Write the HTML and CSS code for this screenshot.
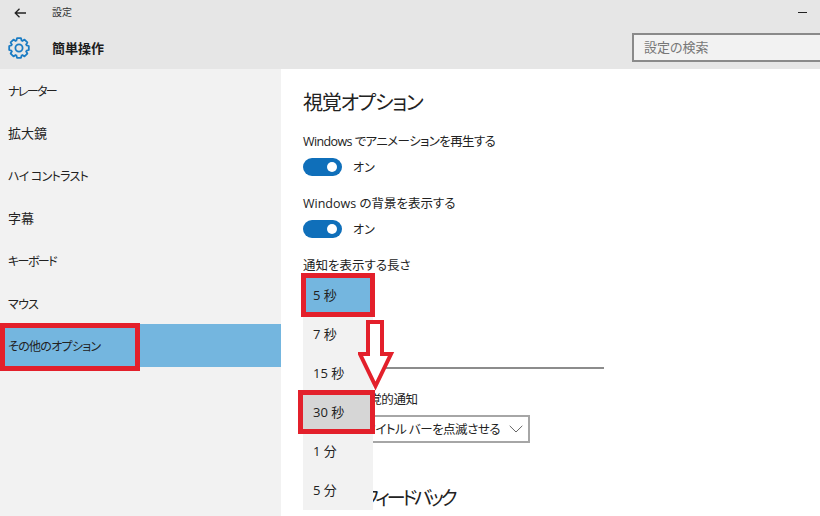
FILE: index.html
```html
<!DOCTYPE html>
<html lang="ja">
<head>
<meta charset="utf-8">
<title>設定</title>
<link rel="stylesheet" href="styles.css">
</head>
<body>
<div class="app">
  <header class="header">
    <div class="titlebar">
      <svg class="back" width="12" height="10" viewBox="0 0 12 10"><path d="M5.5 .8 1.2 5l4.3 4.2M1.2 5H12" fill="none" stroke="#222" stroke-width="1.3"/></svg>
      <span class="app-title">設定</span>
      <span class="minimize"></span>
    </div>
    <div class="headrow">
      <svg class="gear" width="22" height="22" viewBox="-11 -11 22 22">
        <g fill="none" stroke="#1a7cc4" stroke-width="1.8" stroke-linejoin="round">
          <path d="M-2.83-6.84-2-9.8H2L2.83-6.84"/>
          <path transform="rotate(45)" d="M-2.83-6.84-2-9.8H2L2.83-6.84"/>
          <path transform="rotate(90)" d="M-2.83-6.84-2-9.8H2L2.83-6.84"/>
          <path transform="rotate(135)" d="M-2.83-6.84-2-9.8H2L2.83-6.84"/>
          <path transform="rotate(180)" d="M-2.83-6.84-2-9.8H2L2.83-6.84"/>
          <path transform="rotate(225)" d="M-2.83-6.84-2-9.8H2L2.83-6.84"/>
          <path transform="rotate(270)" d="M-2.83-6.84-2-9.8H2L2.83-6.84"/>
          <path transform="rotate(315)" d="M-2.83-6.84-2-9.8H2L2.83-6.84"/>
          <circle r="3.6"/>
        </g>
      </svg>
      <span class="section-title">簡単操作</span>
      <div class="search">設定の検索</div>
    </div>
  </header>
  <div class="body">
    <nav class="sidebar">
      <div class="nav-item tight-2">ナレーター</div>
      <div class="nav-item">拡大鏡</div>
      <div class="nav-item tight-1">ハイ コントラスト</div>
      <div class="nav-item">字幕</div>
      <div class="nav-item tight-2">キーボード</div>
      <div class="nav-item tight-1">マウス</div>
      <div class="nav-item tight-1 selected">その他のオプション</div>
    </nav>
    <main class="main">
      <h1 class="heading">視覚オプション</h1>
      <div class="label tight">Windows でアニメーションを再生する</div>
      <div class="toggle-row"><span class="toggle"><span class="knob"></span></span><span class="state">オン</span></div>
      <div class="label">Windows の背景を表示する</div>
      <div class="toggle-row"><span class="toggle"><span class="knob"></span></span><span class="state">オン</span></div>
      <div class="label">通知を表示する長さ</div>
      <div class="combo">
        <div class="popup">
          <div class="option current">5 秒</div>
          <div class="option">7 秒</div>
          <div class="option">15 秒</div>
          <div class="option hover">30 秒</div>
          <div class="option">1 分</div>
          <div class="option">5 分</div>
        </div>
      </div>
      <div class="slider"></div>
      <div class="label sound">サウンドの視覚的通知</div>
      <div class="select">
        <span class="select-text">アクティブなタイトル バーを点滅させる</span>
        <svg class="chevron" width="14" height="8" viewBox="0 0 14 8"><path d="M.7.8 7 7 13.3.8" fill="none" stroke="#666" stroke-width="1"/></svg>
      </div>
      <h2 class="heading second">タッチ フィードバック</h2>
    </main>
  </div>
  <div class="mark mark-five"></div>
  <div class="mark mark-thirty"></div>
  <div class="mark mark-nav"></div>
  <svg class="arrow" width="40" height="72" viewBox="0 0 40 72">
    <path d="M10 3H24V35H33L17.5 67 2 35H10Z" fill="#fff" stroke="#e3202b" stroke-width="4"/>
  </svg>
</div>
</body>
</html>
```
FILE: styles.css
```css
* { box-sizing: border-box; }
html, body { margin: 0; padding: 0; }
body {
  font-family: "Open Sans", "Noto Sans CJK JP", sans-serif;
  font-feature-settings: "palt";
  color: #222;
  background: #fff;
}
.app {
  position: relative;
  width: 820px;
  height: 516px;
  overflow: hidden;
  display: flex;
  flex-direction: column;
}
.header {
  flex: 0 0 69px;
  background: #e6e6e6;
  display: flex;
  flex-direction: column;
}
.titlebar {
  height: 25px;
  display: flex;
  align-items: center;
  padding-left: 14px;
}
.back { margin-right: 26px; }
.app-title { font-size: 10px; line-height: 12px; margin-top: -2px; color: #333; }
.minimize {
  width: 9px;
  height: 1.5px;
  background: #222;
  margin-left: auto;
  margin-right: 13px;
}
.headrow {
  flex: 1;
  display: flex;
  align-items: flex-start;
  padding-left: 8px;
}
.gear { margin-top: 12px; margin-right: 22px; }
.section-title {
  font-size: 13px;
  font-weight: 700;
  line-height: 20px;
  margin-top: 13px;
  color: #1c1c1c;
}
.search {
  margin-left: auto;
  margin-top: 8px;
  width: 188px;
  height: 29px;
  background: #f2f2f2;
  border: 2px solid #8a8a8a;
  border-right: 0;
  padding-left: 10px;
  font-size: 13px;
  line-height: 24px;
  color: #777;
}
.body { flex: 1; display: flex; min-height: 0; }
.sidebar { flex: 0 0 281px; background: #f2f2f2; }
.nav-item {
  height: 42.5px;
  line-height: 42px;
  padding-left: 8px;
  font-size: 13px;
  color: #222;
}
.nav-item.tight-1 { font-size: 12px; line-height: 46px; letter-spacing: -0.7px; }
.nav-item.tight-2 { font-size: 12px; line-height: 46px; letter-spacing: -1.6px; }
.nav-item.selected { background: #74b6df; }
.main { flex: 1; padding: 21px 0 0 22px; }
.heading {
  margin: 0;
  height: 24px;
  font-size: 20px;
  font-weight: 400;
  line-height: 26px;
  letter-spacing: -1.2px;
  color: #222;
}
.label { font-size: 12.5px; height: 20px; line-height: 22px; margin-top: 17px; }
.label.tight { letter-spacing: -0.6px; }
.toggle-row { display: flex; align-items: center; height: 18px; margin-top: 7px; }
.toggle {
  width: 39px;
  height: 18px;
  border-radius: 9px;
  background: #0f6fba;
  display: flex;
  align-items: center;
  justify-content: flex-end;
  padding-right: 5px;
}
.knob { width: 10px; height: 10px; border-radius: 50%; background: #fff; }
.state { font-size: 12px; line-height: 20px; margin-left: 11px; padding-top: 1px; }
.combo { position: relative; height: 32px; margin-top: 2px; }
.popup {
  position: absolute;
  left: 0;
  top: -1px;
  width: 70px;
  background: #f2f2f2;
  z-index: 1;
}
.option {
  height: 39px;
  line-height: 39px;
  padding-left: 10px;
  font-size: 13px;
  color: #222;
}
.option.current { background: #74b6df; }
.option.hover { background: #d6d6d6; }
.slider { height: 2px; width: 301px; background: #8c8c8c; margin-top: 58px; }
.label.sound { margin-top: 20px; letter-spacing: -0.4px; }
.select {
  margin-top: 6px;
  width: 227px;
  height: 28px;
  border: 2px solid #a6a6a6;
  display: flex;
  align-items: center;
  justify-content: flex-end;
  gap: 9px;
  padding-right: 5px;
  font-size: 12.5px;
  white-space: nowrap;
}
.select-text { flex: none; line-height: 22px; padding-top: 1px; letter-spacing: -0.5px; }
.chevron { flex: none; }
.heading.second {
  margin-top: 41px;
  margin-left: 19px;
  font-size: 19px;
  line-height: 28px;
  letter-spacing: -3.2px;
  white-space: nowrap;
}
.mark { position: absolute; border: 5px solid #e3202b; z-index: 2; }
.mark-five { left: 301px; top: 273px; width: 74px; height: 44px; }
.mark-thirty { left: 298px; top: 390px; width: 77px; height: 44px; }
.mark-nav { left: 0; top: 323px; width: 140px; height: 48px; }
.arrow { position: absolute; left: 358px; top: 319px; z-index: 3; }
```
